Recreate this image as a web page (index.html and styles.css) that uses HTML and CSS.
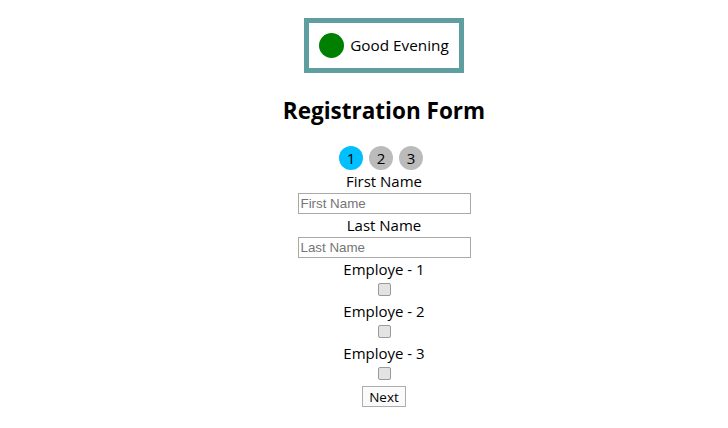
FILE: index.html
```html
<!DOCTYPE html>
<html>
<head>
<meta charset="utf-8">
<link rel="stylesheet" href="styles.css">
</head>
<body>
<div class="page">
  <div class="greeting">
    <span class="dot"></span>
    <span class="greet-text">Good Evening</span>
  </div>
  <h2 class="title">Registration Form</h2>
  <div class="steps">
    <span class="step active">1</span>
    <span class="step">2</span>
    <span class="step">3</span>
  </div>
  <form class="form">
    <label class="label" for="fn">First Name</label>
    <input class="field" id="fn" type="text" placeholder="First Name">
    <label class="label" for="ln">Last Name</label>
    <input class="field" id="ln" type="text" placeholder="Last Name">
    <label class="label">Employe - 1</label>
    <input class="check" type="checkbox">
    <label class="label">Employe - 2</label>
    <input class="check" type="checkbox">
    <label class="label">Employe - 3</label>
    <input class="check" type="checkbox">
    <button class="next" type="button">Next</button>
  </form>
</div>
</body>
</html>
```
FILE: styles.css
```css
body {
  margin: 8px;
  font-family: "Open Sans", "Noto Sans", sans-serif;
  font-size: 15px;
  color: #000;
  background: #fff;
}
.page {
  display: flex;
  flex-direction: column;
  align-items: center;
  padding-top: 10px;
  padding-left: 40px;
}
.greeting {
  display: flex;
  align-items: center;
  gap: 6px;
  border: 5px solid #5f9ea0;
  padding: 10px 10px 10px 10px;
}
.dot {
  width: 25px;
  height: 25px;
  border-radius: 50%;
  background: #008000;
}
.greet-text {
  font-size: 15.3px;
  line-height: 21px;
}
.title {
  font-size: 22.5px;
  font-weight: 700;
  line-height: 32px;
  margin: 22px 0 19px;
}
.steps {
  display: flex;
  gap: 6px;
  margin-right: 6px;
}
.step {
  width: 24px;
  height: 24px;
  border-radius: 50%;
  background: #bbbbbb;
  text-align: center;
  line-height: 24px;
  font-size: 15px;
}
.step.active {
  background: #00bfff;
}
.form {
  display: flex;
  flex-direction: column;
  align-items: center;
}
.label {
  line-height: 23px;
}
.field {
  width: 173px;
  height: 21px;
  box-sizing: border-box;
  border: 1px solid #a9a9a9;
  padding: 1px 2px;
  font-family: "Liberation Sans", Arial, sans-serif;
  font-size: 13.33px;
  margin: 0;
}
.field::placeholder {
  color: #757575;
}
.check {
  appearance: none;
  -webkit-appearance: none;
  box-sizing: border-box;
  width: 13px;
  height: 13px;
  margin: 2px 0 4px;
  border: 1px solid #9a9a9a;
  border-radius: 2px;
  background: #e3e3e3;
}
.next {
  margin-top: 2px;
  box-sizing: border-box;
  height: 21px;
  width: 44px;
  padding: 0;
  font-family: "Open Sans", "Noto Sans", sans-serif;
  font-size: 13.5px;
  color: #000;
  background: #fafafa;
  border: 1px solid #adadad;
  border-radius: 0;
}
```
